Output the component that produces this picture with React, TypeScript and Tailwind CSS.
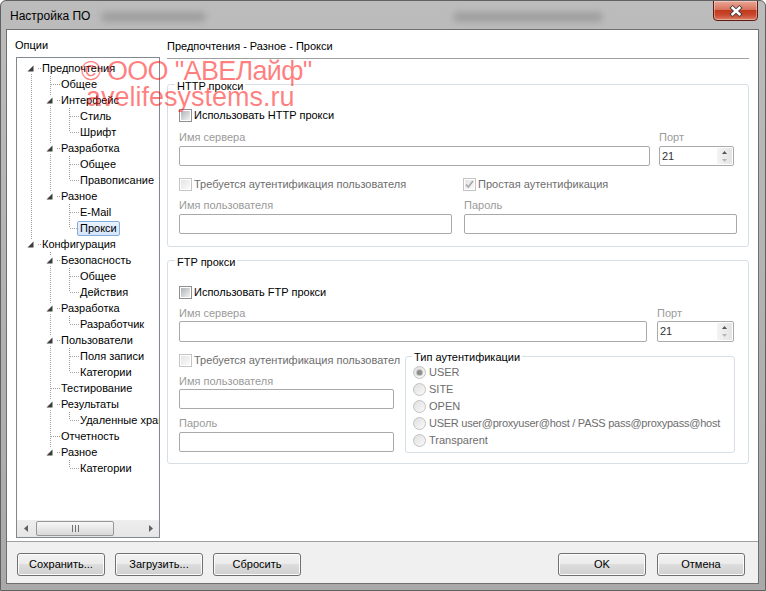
import { useId } from "react";

type TreeNode = { label: string; children?: TreeNode[]; selected?: boolean };

const tree: TreeNode[] = [
  {
    label: "Предпочтения",
    children: [
      { label: "Общее" },
      { label: "Интерфейс", children: [{ label: "Стиль" }, { label: "Шрифт" }] },
      { label: "Разработка", children: [{ label: "Общее" }, { label: "Правописание" }] },
      { label: "Разное", children: [{ label: "E-Mail" }, { label: "Прокси", selected: true }] },
    ],
  },
  {
    label: "Конфигурация",
    children: [
      { label: "Безопасность", children: [{ label: "Общее" }, { label: "Действия" }] },
      { label: "Разработка", children: [{ label: "Разработчик" }] },
      { label: "Пользователи", children: [{ label: "Поля записи" }, { label: "Категории" }] },
      { label: "Тестирование" },
      { label: "Результаты", children: [{ label: "Удаленные хранилища" }] },
      { label: "Отчетность" },
      { label: "Разное", children: [{ label: "Категории" }] },
    ],
  },
];

type Row = { node: TreeNode; depth: number; lasts: boolean[]; first: boolean };

const flatten = (nodes: TreeNode[], depth: number, lasts: boolean[], out: Row[]) => {
  nodes.forEach((n, i) => {
    const chain = [...lasts, i === nodes.length - 1];
    out.push({ node: n, depth, lasts: chain, first: depth === 0 && i === 0 });
    if (n.children) flatten(n.children, depth + 1, chain, out);
  });
  return out;
};

const rows = flatten(tree, 0, [], []);

// one 19px column of the tree's dotted guide lines
const Guide = ({ up, down, across, expander }: { up?: boolean; down?: boolean; across?: boolean; expander?: boolean }) => (
  <svg width="19" height="16" className="block shrink-0">
    {up && <line x1="9.5" y1="0" x2="9.5" y2="8" stroke="#a0a0a0" strokeDasharray="1 1" />}
    {down && <line x1="9.5" y1="8" x2="9.5" y2="16" stroke="#a0a0a0" strokeDasharray="1 1" />}
    {across && <line x1="10" y1="8.5" x2="19" y2="8.5" stroke="#a0a0a0" strokeDasharray="1 1" />}
    {expander && (
      <>
        <rect x="4" y="3" width="11" height="11" fill="#fff" />
        <polygon points="11.5,5.5 11.5,11.5 5.5,11.5" fill="#3d3d3d" />
      </>
    )}
  </svg>
);

const TreeRow = ({ row }: { row: Row }) => {
  const cols = [];
  for (let k = 0; k < row.depth; k++) {
    cols.push(<Guide key={k} up={!row.lasts[k]} down={!row.lasts[k]} />);
  }
  cols.push(
    <Guide
      key="own"
      up={!row.first}
      down={!row.lasts[row.depth]}
      across
      expander={!!row.node.children}
    />
  );
  return (
    <div className="flex h-[16px] items-center">
      {cols}
      <span
        className={`ml-[-2px] h-[15px] whitespace-nowrap rounded-[2px] border px-[2px] leading-[13px] ${
          row.node.selected
            ? "border-[#84acdd] bg-linear-to-b from-[#eaf2fd] to-[#d3e4fa]"
            : "border-transparent"
        }`}
      >
        {row.node.label}
      </span>
    </div>
  );
};

const CheckBox = ({ enabled, checked }: { enabled?: boolean; checked?: boolean }) => {
  const id = useId();
  return (
    <svg width="13" height="13" className="block shrink-0">
      <defs>
        <linearGradient id={id} x1="0" y1="0" x2="1" y2="1">
          <stop offset="0" stopColor={enabled ? "#aeb3b9" : "#e4e4e4"} />
          <stop offset="1" stopColor={enabled ? "#f2f2f2" : "#fafafa"} />
        </linearGradient>
      </defs>
      <rect x="0.5" y="0.5" width="12" height="12" fill="#fff" stroke={enabled ? "#8e8f8f" : "#c4c4c4"} />
      <rect x="2" y="2" width="9" height="9" fill={`url(#${id})`} />
      {checked && <path d="M3 6.5 L5.3 9 L10 3" fill="none" stroke="#a6a6a6" strokeWidth="1.6" />}
    </svg>
  );
};

const Radio = ({ checked }: { checked?: boolean }) => {
  const id = useId();
  return (
    <svg width="13" height="13" className="block shrink-0">
      <defs>
        <linearGradient id={id} x1="0" y1="0" x2="1" y2="1">
          <stop offset="0" stopColor="#dedede" />
          <stop offset="1" stopColor="#fbfbfb" />
        </linearGradient>
      </defs>
      <circle cx="6.5" cy="6.5" r="6" fill={`url(#${id})`} stroke="#c2c2c2" />
      {checked && (
        <>
          <circle cx="6.5" cy="6.5" r="3.6" fill="#c9c9c9" />
          <circle cx="6.5" cy="6.5" r="2.6" fill="#8d8d8d" />
        </>
      )}
    </svg>
  );
};

const CheckRow = ({ label, enabled, checked }: { label: string; enabled?: boolean; checked?: boolean }) => (
  <div className="flex h-[14px] items-center gap-[2px] whitespace-nowrap">
    <CheckBox enabled={enabled} checked={checked} />
    <span className={enabled ? "text-black" : "text-[#6d6d6d]"}>{label}</span>
  </div>
);

const Label = ({ children }: { children: string }) => (
  <div className="leading-[14px] text-[#9a9a9a]">{children}</div>
);

const TextBox = ({ className = "" }: { className?: string }) => (
  <div className={`rounded-[2px] border border-[#a9a9a9] bg-white ${className}`} />
);

const Spin = ({ className = "" }: { className?: string }) => (
  <div className={`flex rounded-[2px] border border-[#a9a9a9] bg-white ${className}`}>
    <div className="flex-1 pl-[2px] leading-[18px] text-[#333]">21</div>
    <div className="m-[1px] flex w-[15px] flex-col bg-linear-to-r from-[#f4f4f4] to-[#e4e4e4]">
      <div className="flex flex-1 items-center justify-center">
        <svg width="5" height="3" className="block">
          <polygon points="0,3 2.5,0 5,3" fill="#555" />
        </svg>
      </div>
      <div className="flex flex-1 items-center justify-center">
        <svg width="5" height="3" className="block">
          <polygon points="0,0 5,0 2.5,3" fill="#b8b8b8" />
        </svg>
      </div>
    </div>
  </div>
);

const Legend = ({ children, className = "" }: { children: string; className?: string }) => (
  <div className={`self-start bg-white px-[2px] leading-[14px] ${className}`}>{children}</div>
);

const Button = ({ children }: { children: string }) => (
  <button className="h-[23px] w-[88px] rounded-[3px] border border-[#707070] bg-[linear-gradient(#f2f2f2,#ebebeb_50%,#dddddd_50%,#cfcfcf)] leading-none shadow-[inset_0_0_0_1px_#fcfcfc]">
    {children}
  </button>
);

const App = () => {
  return (
    <div className="relative h-[591px] w-[766px] overflow-hidden rounded-t-[6px] border border-[#616161] bg-linear-to-b from-[#bcbcbc] to-[#a9a9a9] font-['Liberation_Sans',Arial,sans-serif] text-[11px] text-black">
      {/* Title bar */}
      <div className="relative flex h-[28px] items-start">
        <div className="absolute left-[100px] top-[11px] h-[10px] w-[105px] rounded-full bg-[#8d8d8d] opacity-60 blur-[3px]" />
        <div className="absolute left-[452px] top-[11px] h-[10px] w-[150px] rounded-full bg-[#8d8d8d] opacity-60 blur-[3px]" />
        <div className="relative pl-[9px] pt-[8px] text-[12px] leading-[14px]">Настройка ПО</div>
        <div className="relative ml-auto mr-[7px] mt-[-1px] h-[21px] w-[45px] rounded-b-[4px] border border-[#5c1c12] bg-[linear-gradient(#e9a898,#d8735c_45%,#c2381d_50%,#c94a31_75%,#dc8068)] shadow-[inset_0_0_0_1px_rgba(255,255,255,0.35)]">
          <svg width="43" height="20" className="block">
            <path d="M17 5.5 L27 14.5 M27 5.5 L17 14.5" stroke="#3a3a3a" strokeWidth="4.2" />
            <path d="M17.6 6 L26.4 14 M26.4 6 L17.6 14" stroke="#fff" strokeWidth="2.4" />
          </svg>
        </div>
      </div>

      {/* Client area */}
      <div className="ml-[5px] mr-[6px] flex h-[555px] flex-col border border-[#6f6f6f] bg-white">
        <div className="flex h-[511px]">
          {/* Options tree */}
          <div className="flex flex-col pl-[8px]">
            <div className="pt-[8px] leading-[14px]">Опции</div>
            <div className="ml-[1px] mt-[5px] flex h-[481px] w-[144px] flex-col border border-[#828790]">
              <div className="flex-1 overflow-hidden pl-[5px] pt-[2px]">
                {rows.map((r, i) => (
                  <TreeRow key={i} row={r} />
                ))}
              </div>
              <div className="flex h-[17px] items-center bg-linear-to-b from-[#eeeeee] to-[#e6e6e6]">
                <div className="flex w-[17px] justify-center">
                  <svg width="4" height="7" className="block">
                    <polygon points="4,0 4,7 0,3.5" fill="#606060" />
                  </svg>
                </div>
                <div className="ml-[2px] flex h-[15px] w-[78px] items-center justify-center gap-[1px] rounded-[2px] border border-[#979797] bg-linear-to-b from-[#f7f7f7] to-[#d9d9d9]">
                  <span className="h-[7px] w-[1px] bg-[#707070]" />
                  <span className="ml-[1px] h-[7px] w-[1px] bg-[#707070]" />
                  <span className="ml-[1px] h-[7px] w-[1px] bg-[#707070]" />
                </div>
                <div className="ml-auto flex w-[17px] justify-center">
                  <svg width="4" height="7" className="block">
                    <polygon points="0,0 4,3.5 0,7" fill="#606060" />
                  </svg>
                </div>
              </div>
            </div>
          </div>

          {/* Page */}
          <div className="ml-[7px] flex w-[582px] flex-col">
            <div className="border-b border-[#a0a0a0] pb-[5px] pt-[9px] leading-[14px]">
              Предпочтения - Разное - Прокси
            </div>

            {/* HTTP */}
            <div className="mt-[25px] flex flex-col rounded-[3px] border border-[#d5dfe5] px-[11px] pb-[12px]">
              <Legend className="-ml-[4px] -mt-[6px]">HTTP прокси</Legend>
              <div className="mt-[15px]">
                <CheckRow label="Использовать HTTP прокси" enabled />
              </div>
              <div className="mt-[8px] flex">
                <div className="w-[471px]">
                  <Label>Имя сервера</Label>
                  <TextBox className="mt-[2px] h-[20px]" />
                </div>
                <div className="ml-[9px] w-[75px]">
                  <Label>Порт</Label>
                  <Spin className="mt-[2px] h-[20px]" />
                </div>
              </div>
              <div className="mt-[11px] flex">
                <div className="w-[284px]">
                  <CheckRow label="Требуется аутентификация пользователя" />
                </div>
                <CheckRow label="Простая аутентификация" checked />
              </div>
              <div className="mt-[7px] flex gap-[12px]">
                <div className="w-[273px]">
                  <Label>Имя пользователя</Label>
                  <TextBox className="mt-[2px] h-[20px]" />
                </div>
                <div className="w-[273px]">
                  <Label>Пароль</Label>
                  <TextBox className="mt-[2px] h-[20px]" />
                </div>
              </div>
            </div>

            {/* FTP */}
            <div className="mt-[13px] flex flex-col rounded-[3px] border border-[#d5dfe5] px-[11px] pb-[10px]">
              <Legend className="-ml-[4px] -mt-[6px]">FTP прокси</Legend>
              <div className="mt-[16px]">
                <CheckRow label="Использовать FTP прокси" enabled />
              </div>
              <div className="mt-[7px] flex">
                <div className="w-[468px]">
                  <Label>Имя сервера</Label>
                  <TextBox className="mt-[1px] h-[21px]" />
                </div>
                <div className="ml-[10px] w-[77px]">
                  <Label>Порт</Label>
                  <Spin className="mt-[1px] h-[21px]" />
                </div>
              </div>
              <div className="mt-[11px] flex items-start">
                <div className="w-[221px] overflow-hidden">
                  <CheckRow label="Требуется аутентификация пользователя" />
                  <div className="mt-[7px] w-[215px]">
                    <Label>Имя пользователя</Label>
                    <TextBox className="mt-[1px] h-[20px]" />
                  </div>
                  <div className="mt-[7px] w-[215px]">
                    <Label>Пароль</Label>
                    <TextBox className="mt-[2px] h-[20px]" />
                  </div>
                </div>
                <div className="ml-[5px] mt-[3px] flex w-[330px] flex-col rounded-[3px] border border-[#d5dfe5] pb-[3px] pl-[7px]">
                  <Legend className="-ml-[1px] -mt-[7px]">Тип аутентификации</Legend>
                  {[
                    "USER",
                    "SITE",
                    "OPEN",
                    "USER user@proxyuser@host / PASS pass@proxypass@host",
                    "Transparent",
                  ].map((t, i) => (
                    <div key={t} className="flex h-[17px] items-center gap-[3px] whitespace-nowrap text-[#6d6d6d]">
                      <Radio checked={i === 0} />
                      <span className={i === 3 ? "tracking-[-0.25px]" : ""}>{t}</span>
                    </div>
                  ))}
                </div>
              </div>
            </div>
          </div>
        </div>

        {/* Buttons */}
        <div className="flex h-[42px] border-t border-[#a0a0a0] bg-[#f0f0f0] pl-[10px] pr-[13px] pt-[11px]">
          <div className="flex gap-[10px]">
            <Button>Сохранить...</Button>
            <Button>Загрузить...</Button>
            <Button>Сбросить</Button>
          </div>
          <div className="ml-auto flex gap-[11px]">
            <Button>OK</Button>
            <Button>Отмена</Button>
          </div>
        </div>
      </div>

      {/* Watermark */}
      <div className="pointer-events-none absolute left-[80px] top-[57px] whitespace-nowrap font-['Liberation_Sans',Arial,sans-serif] text-[27px] leading-[26px] text-[rgba(255,0,0,0.5)]">
        <div className="tracking-[-0.7px]">© ООО "АВЕЛайф"</div>
        <div className="ml-[5px]">avelifesystems.ru</div>
      </div>
    </div>
  );
};

export default App;
